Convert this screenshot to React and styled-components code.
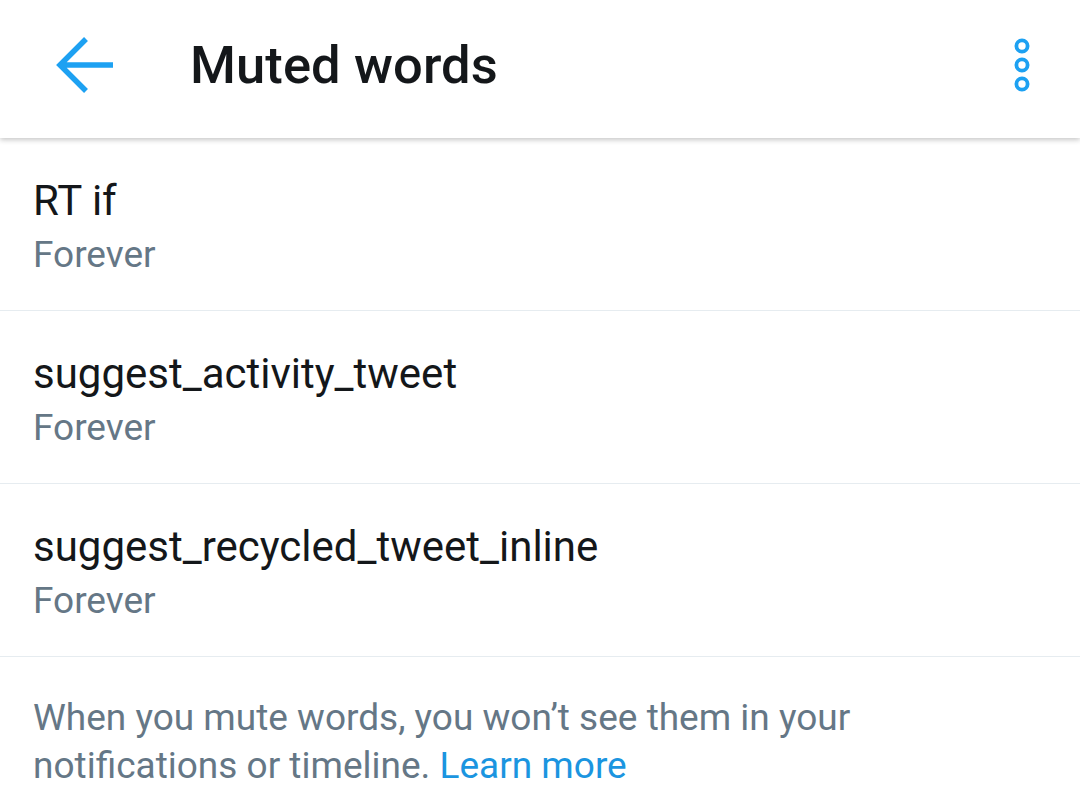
import React from 'react';
import styled, { createGlobalStyle } from 'styled-components';

const GlobalStyle = createGlobalStyle`
  html, body {
    margin: 0;
    padding: 0;
    background: #ffffff;
    font-family: Roboto, "Noto Sans", "Liberation Sans", sans-serif;
  }
`;

const Page = styled.div`
  width: 1080px;
  height: 810px;
  overflow: hidden;
  background: #ffffff;
`;

const Toolbar = styled.header`
  position: relative;
  z-index: 1;
  display: flex;
  align-items: center;
  height: 138px;
  padding: 0 49px 8px 56px;
  box-sizing: border-box;
  background: #ffffff;
  box-shadow: 0 2px 5px rgba(0, 0, 0, 0.22);
`;

const IconButton = styled.button`
  display: flex;
  align-items: center;
  justify-content: center;
  padding: 0;
  border: 0;
  background: none;
  cursor: pointer;
`;

const Title = styled.h1`
  flex: 1;
  margin: 0 0 0 76px;
  font-size: 52.5px;
  font-weight: 500;
  letter-spacing: 0.1px;
  color: #14171a;
`;

const List = styled.ul`
  list-style: none;
  margin: 0;
  padding: 0;
`;

const Row = styled.li`
  padding: 37px 33px 27px;
  border-bottom: 1px solid #e6ecf0;
`;

const Word = styled.div`
  font-size: 42px;
  line-height: 52px;
  color: #14171a;
`;

const Duration = styled.div`
  font-size: 37px;
  line-height: 56px;
  color: #657786;
`;

const Footer = styled.p`
  max-width: 880px;
  margin: 0;
  padding: 37px 33px 0;
  font-size: 37px;
  line-height: 48px;
  color: #657786;
`;

const Link = styled.a`
  color: #1b95e0;
  text-decoration: none;
`;

const BackArrow = () => (
  <svg width="58" height="60" viewBox="0 0 58 60">
    <path
      d="M57 30H5M30 4L4 30l26 26"
      fill="none"
      stroke="#1da1f2"
      strokeWidth="5.5"
      strokeLinejoin="miter"
    />
  </svg>
);

const Overflow = () => (
  <svg width="18" height="58" viewBox="0 0 18 58">
    {[10, 29, 48].map((cy) => (
      <circle key={cy} cx="9" cy={cy} r="5.6" fill="none" stroke="#1da1f2" strokeWidth="3.8" />
    ))}
  </svg>
);

const words = [
  { text: 'RT if', duration: 'Forever' },
  { text: 'suggest_activity_tweet', duration: 'Forever' },
  { text: 'suggest_recycled_tweet_inline', duration: 'Forever' },
];

const App = () => (
  <Page>
    <GlobalStyle />
    <Toolbar>
      <IconButton aria-label="Back">
        <BackArrow />
      </IconButton>
      <Title>Muted words</Title>
      <IconButton aria-label="More options">
        <Overflow />
      </IconButton>
    </Toolbar>
    <List>
      {words.map((w) => (
        <Row key={w.text}>
          <Word>{w.text}</Word>
          <Duration>{w.duration}</Duration>
        </Row>
      ))}
    </List>
    <Footer>
      When you mute words, you won’t see them in your notifications or timeline.{' '}
      <Link href="#">Learn more</Link>
    </Footer>
  </Page>
);

export default App;
